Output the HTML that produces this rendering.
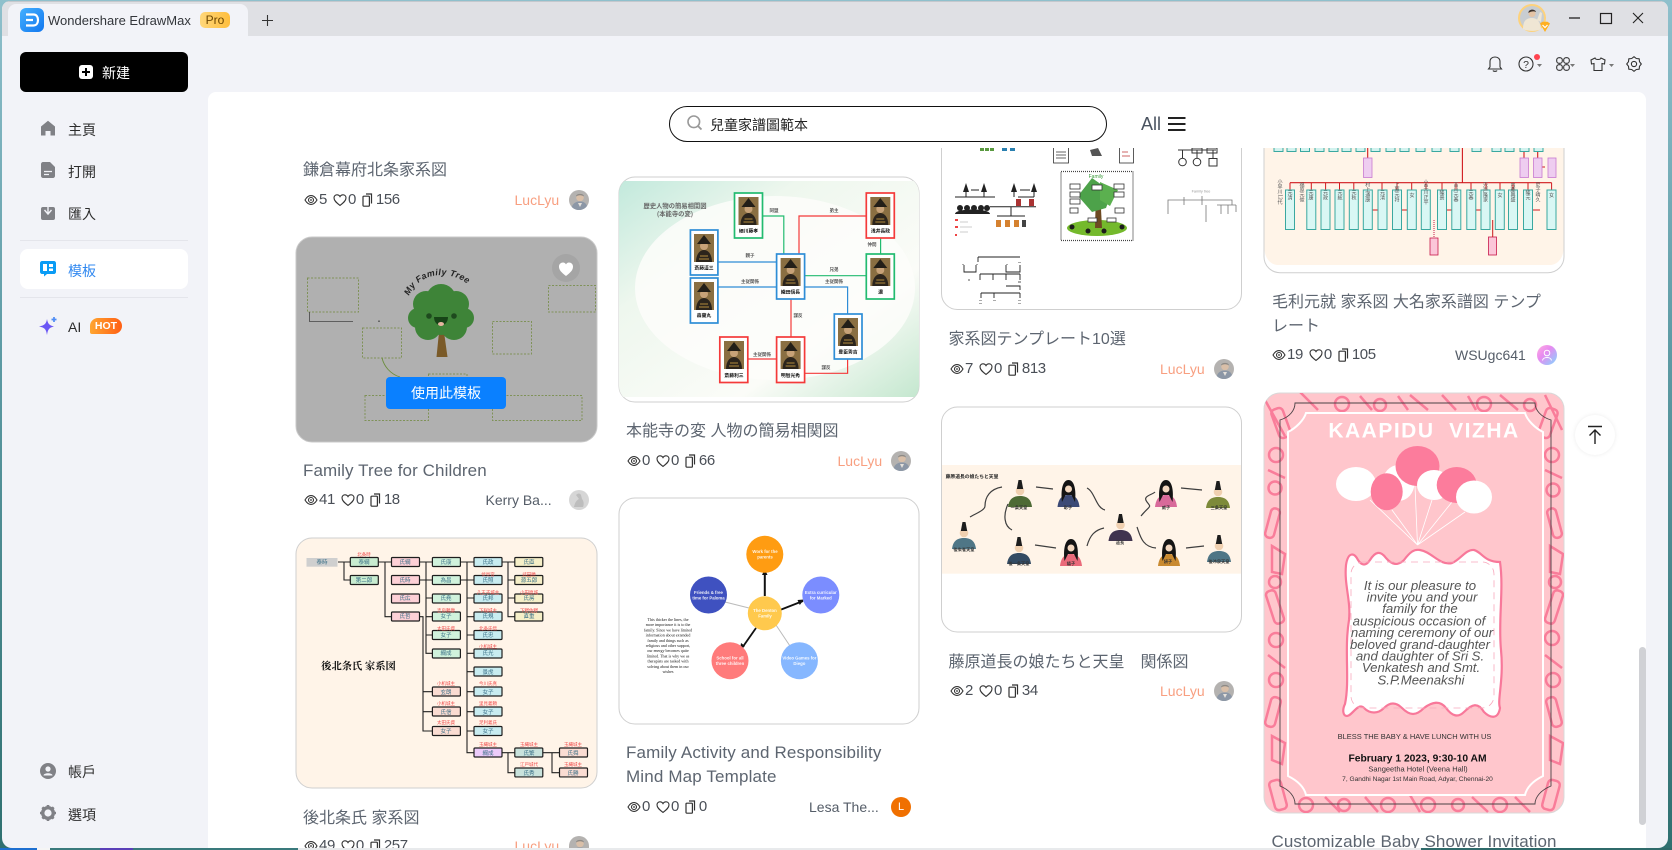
<!DOCTYPE html>
<html><head><meta charset="utf-8"><title>Wondershare EdrawMax</title>
<style>
*{box-sizing:border-box;margin:0;padding:0}
html,body{width:1672px;height:850px;overflow:hidden}
body{position:relative;background:linear-gradient(180deg,#8fc0cc 0%,#5f9ca6 40%,#2f7070 100%);font-family:"Liberation Sans","Noto Sans CJK TC",sans-serif;color:#333}
.a{position:absolute;white-space:nowrap}
.nav{position:absolute;left:68px;font-size:14px;line-height:20px;color:#2c2c2c;font-family:"Liberation Sans","Noto Sans CJK TC",sans-serif}
.t{position:absolute;font-size:16px;line-height:24px;color:#5d6570;white-space:nowrap;font-family:"Liberation Sans","Noto Sans CJK JP",sans-serif}
.e{font-size:17px;letter-spacing:.1px}
.s{position:absolute;display:flex;align-items:center;height:18px;font-size:15px;letter-spacing:-.4px;color:#4a4f57;line-height:18px;white-space:nowrap}
.s svg{flex:none}
.s b{font-weight:normal;margin:0 6px 0 1px}
.s i{font-style:normal;margin-left:3px}
.u{position:absolute;font-size:14px;line-height:18px;white-space:nowrap;color:#f89f80}
.g{color:#555d68}
.av{position:absolute;width:20px;height:20px;border-radius:50%;overflow:hidden}
.av svg{display:block}
</style></head><body>
<svg width="0" height="0" style="position:absolute"><defs>
<symbol id="eye" viewBox="0 0 14 14"><path d="M1 7C3 3.600 5 2.600 7 2.600S11 3.600 13 7C11 10.400 9 11.400 7 11.400S3 10.400 1 7Z" fill="none" stroke="#333" stroke-width="1.100"/><circle cx="7" cy="7" r="2.500" fill="none" stroke="#333" stroke-width="1.100"/><circle cx="7" cy="7" r=".9" fill="#333"/></symbol>
<symbol id="heart" viewBox="0 0 14 14"><path d="M7 12.400C3 9.400 1 7.400 1 4.900 1 3 2.400 1.800 4 1.800 5.200 1.800 6.300 2.400 7 3.600 7.700 2.400 8.800 1.800 10 1.800 11.600 1.800 13 3 13 4.900 13 7.400 11 9.400 7 12.400Z" fill="none" stroke="#333" stroke-width="1.100"/></symbol>
<symbol id="doc" viewBox="0 0 11 14"><rect x="1" y="3.200" width="6.400" height="10" rx=".8" fill="none" stroke="#333" stroke-width="1.200"/><path d="M4 1H9.500V10.500" fill="none" stroke="#333" stroke-width="1.200"/></symbol>
<symbol id="ph" viewBox="0 0 20 20"><rect width="20" height="20" fill="#b4b2b0"/><path d="M2 20C3 13 7 11.500 11 11.500S18 13 19 20Z" fill="#8c97a6"/><circle cx="11" cy="7.500" r="3.800" fill="#d9bfa8"/><path d="M7 6.500C7 3 15 3 15 6.500 13 4.800 9 4.800 7 6.500Z" fill="#8d8a86"/><path d="M9 13 11 17 13 13Z" fill="#e4e0da"/></symbol>
<g id="por"><rect width="20" height="28" fill="#8a6f42"/><path d="M2 28C2 20 6 16 10 16S18 20 18 28Z" fill="#2b241c"/><circle cx="10" cy="12" r="4" fill="#c7a278"/><path d="M3 10 10 1 17 10Z" fill="#231f18"/><path d="M6 22H14M5 25H15" stroke="#b08a3c" stroke-width="1"/></g>
<g id="man"><path d="M-12 14C-11 6-7 3 0 3S11 6 12 14Z" fill="currentColor"/><circle cx="0" cy="-2" r="4.300" fill="#f0d0b0"/><path d="M-3.200-4-1.500-13H1.500L3.200-4Z" fill="#1d1d1d"/></g>
<g id="lady"><path d="M-11 15C-10 6-6 3 0 3S10 6 11 15Z" fill="currentColor"/><path d="M-6.500 10C-8-3-5.500-12 0-12S8-3 6.500 10L3 3H-3Z" fill="#141414"/><circle cx="0" cy="-3" r="3.500" fill="#f3d8c0"/></g>
<clipPath id="c1"><rect x="296" y="237" width="301" height="205" rx="16"/></clipPath>
<clipPath id="c2"><rect x="296" y="538" width="301" height="250" rx="16"/></clipPath>
<clipPath id="c3"><rect x="619" y="177" width="300" height="225" rx="16"/></clipPath>
<clipPath id="c4"><rect x="1264" y="393" width="300" height="420" rx="16"/></clipPath>
<linearGradient id="gbg" x1="0" y1="0" x2="1" y2="1"><stop offset="0" stop-color="#c2e9dc"/><stop offset=".3" stop-color="#eef7ee"/><stop offset=".7" stop-color="#fbfcf8"/><stop offset="1" stop-color="#c4e7cf"/></linearGradient>
</defs></svg>

<!-- window -->
<div class="a" style="left:2px;top:1px;width:1666px;height:847px;background:#f2f3f8;border-radius:8px 8px 10px 10px;overflow:hidden">
  <div style="position:absolute;left:0;top:0;width:100%;height:35px;background:#dfe0e4;border-top:1px solid #c4c8cd"></div>
</div>
<div class="a" style="left:8px;top:4px;width:240px;height:32px;background:#f2f3f8;border-radius:8px 8px 0 0"></div>
<div class="a" style="left:20px;top:8px;width:24px;height:24px;border-radius:6px;background:linear-gradient(135deg,#44b0ff,#1277ef)"></div>
<svg class="a" style="left:20px;top:8px" width="24" height="24" viewBox="0 0 24 24"><path d="M6 6.500H13.500C16.500 6.500 18 9 18 12S16.500 17.500 13.500 17.500H6" fill="none" stroke="#fff" stroke-width="2.200"/><path d="M6 12H13" stroke="#fff" stroke-width="2.200"/></svg>
<div class="a" style="left:48px;top:11px;font-size:13px;line-height:20px;color:#33363b">Wondershare EdrawMax</div>
<div class="a" style="left:200px;top:12px;width:30px;height:16px;border-radius:5px;background:linear-gradient(90deg,#ffd77a,#ffbe3d);font-size:12px;line-height:16px;text-align:center;color:#6c4600">Pro</div>
<svg class="a" style="left:261px;top:14px" width="13" height="13"><path d="M6.500 1V12M1 6.500H12" stroke="#333" stroke-width="1.100"/></svg>

<!-- win controls -->
<svg class="a" style="left:1517px;top:3px" width="36" height="30" viewBox="0 0 36 30">
<circle cx="15" cy="15" r="13" fill="#c8cdd1" stroke="#fdd27c" stroke-width="2"/>
<path d="M6 26C6 17 10 15 15 15S23 18 24 26C20 28.500 10 28.500 6 26Z" fill="#efe6d4"/><path d="M20 17 23 9 25 10 24 19Z" fill="#efe6d4"/>
<circle cx="15" cy="10.500" r="3.600" fill="#e4c4a6"/><path d="M11.500 10C11 6 18 5.500 19 9 17 8 14 8 11.500 10Z" fill="#3c322c"/>
<path d="M23 20.500 25.500 18.800H30.500L33 20.500 28 29Z" fill="#ffb020"/><path d="M25.500 22 28 24.500 30.500 22" stroke="#fff" fill="none" stroke-width="1.200"/>
</svg>
<svg class="a" style="left:1565px;top:8px" width="90" height="22"><path d="M4 10H15" stroke="#222" stroke-width="1.300"/><rect x="35.500" y="5.500" width="11" height="10" fill="none" stroke="#222" stroke-width="1.200"/><path d="M68 5 78 15M78 5 68 15" stroke="#222" stroke-width="1.100"/></svg>

<!-- toolbar -->
<svg class="a" style="left:1486px;top:54px" width="166" height="20" fill="none" stroke="#333" stroke-width="1.100">
<path d="M4 13V7.500C4 4.800 6 3 9 3S14 4.800 14 7.500V13L15.500 15H2.500Z"/><path d="M7 16.500C7.500 17.600 10.500 17.600 11 16.500"/>
<circle cx="40" cy="10" r="7"/><text x="40" y="14" font-size="10.500" fill="#333" stroke="none" text-anchor="middle" font-family="Liberation Sans">?</text>
<circle cx="51" cy="3" r="3" fill="#ff4350" stroke="none"/><path d="M51 10H56L53.500 13Z" fill="#777" stroke="none"/>
<rect x="70.700" y="3.700" width="5.600" height="5.600" rx="2.300"/><rect x="77.700" y="3.700" width="5.600" height="5.600" rx="2.300"/><rect x="70.700" y="10.700" width="5.600" height="5.600" rx="2.300"/><rect x="77.700" y="10.700" width="5.600" height="5.600" rx="2.300"/><path d="M84 10H89L86.500 13Z" fill="#777" stroke="none"/>
<path d="M109 4 105 6 105.500 10 108 9.500V16.500H116V9.500L118.500 10 119 6 115 4C114.500 6 109.500 6 109 4Z"/><path d="M123 10H128L125.500 13Z" fill="#777" stroke="none"/>
<path stroke-linejoin="round" d="M155.300 10 153.500 12.300 153.200 15.200 150.300 15.500 148 17.300 145.700 15.500 142.800 15.200 142.500 12.300 140.700 10 142.500 7.700 142.800 4.800 145.700 4.500 148 2.700 150.300 4.500 153.200 4.800 153.500 7.700Z"/><circle cx="148" cy="10" r="2.600"/>
</svg>

<!-- sidebar -->
<div class="a" style="left:20px;top:52px;width:168px;height:40px;background:#000;border-radius:6px"></div>
<svg class="a" style="left:79px;top:65px" width="14" height="14"><rect width="14" height="14" rx="3" fill="#fff"/><path d="M7 3V11M3 7H11" stroke="#000" stroke-width="2"/></svg>
<div class="a" style="left:102px;top:63px;font-size:14px;line-height:20px;color:#fff">新建</div>

<svg class="a" style="left:40px;top:120px" width="16" height="16"><path d="M8 .800 15 6.500V15.500H10.500V11H5.500V15.500H1V6.500Z" fill="#808186"/></svg>
<div class="nav" style="top:120px">主頁</div>
<svg class="a" style="left:41px;top:162px" width="14" height="16"><path d="M0 2C0 1 1 0 2 0H9L14 5V14C14 15 13 16 12 16H2C1 16 0 15 0 14Z" fill="#808186"/><path d="M3 9.500H11M3 12.500H8" stroke="#f2f3f8" stroke-width="1.200"/></svg>
<div class="nav" style="top:162px">打開</div>
<svg class="a" style="left:41px;top:203px" width="14" height="17"><rect y="4" width="14" height="13" rx="2" fill="#808186"/><path d="M7 0V10M3.500 7 7 11 10.500 7" stroke="#f2f3f8" fill="none" stroke-width="1.400"/></svg>
<div class="nav" style="top:204px">匯入</div>
<div class="a" style="left:20px;top:240px;width:168px;height:1px;background:#e4e5eb"></div>
<div class="a" style="left:20px;top:249px;width:168px;height:40px;background:#fff;border-radius:8px"></div>
<svg class="a" style="left:40px;top:261px" width="16" height="16"><path d="M2 0H14C15 0 16 1 16 2V11C16 12 15 13 14 13H7L4 15.500V13H2C1 13 0 12 0 11V2C0 1 1 0 2 0Z" fill="#0a9cf5"/><path d="M3 3H7V10H3ZM9 3H13V6H9ZM9 7.500H13V10H9Z" fill="#fff"/></svg>
<div class="nav" style="top:261px;color:#3088f0">模板</div>
<div class="a" style="left:20px;top:297px;width:168px;height:1px;background:#e4e5eb"></div>
<svg class="a" style="left:38px;top:316px" width="20" height="20"><path d="M9 3C9.800 7.500 11 9.300 16 10.500 11 11.700 9.800 13.500 9 19 8.200 13.500 7 11.700 1 10.500 7 9.300 8.200 7.500 9 3Z" fill="#6a56f5"/><path d="M16 1V6M13.500 3.500H18.500" stroke="#4f8df5" stroke-width="1.700"/></svg>
<div class="nav" style="top:317px">AI</div>
<div class="a" style="left:90px;top:318px;width:32px;height:16px;border-radius:8px 8px 8px 2px;background:linear-gradient(90deg,#ffa530,#ff5f14);color:#fff;font-size:10.500px;font-weight:bold;line-height:16px;text-align:center">HOT</div>
<svg class="a" style="left:40px;top:763px" width="16" height="16"><circle cx="8" cy="8" r="8" fill="#808186"/><circle cx="8" cy="6" r="2.600" fill="#f2f3f8"/><path d="M3.500 12.500C3.500 9.500 12.500 9.500 12.500 12.500Z" fill="#f2f3f8"/></svg>
<div class="nav" style="top:762px">帳戶</div>
<svg class="a" style="left:40px;top:805px" width="16" height="16"><circle cx="8" cy="8" r="5.300" fill="none" stroke="#808186" stroke-width="3.400"/><path d="M8 0V16M0 8H16M2.300 2.300 13.700 13.700M13.700 2.300 2.300 13.700" stroke="#808186" stroke-width="2.600" stroke-dasharray="2.600 10.800"/></svg>
<div class="nav" style="top:805px">選項</div>

<!-- main panel -->
<div class="a" style="left:208px;top:92px;width:1438px;height:757px;background:#fff;border-radius:8px 8px 0 0"></div>

<!-- search -->
<div class="a" style="left:669px;top:106px;width:438px;height:36px;border:1.500px solid #111;border-radius:18px;background:#fff"></div>
<svg class="a" style="left:686px;top:114px" width="18" height="18"><circle cx="7.800" cy="7.800" r="5.800" fill="none" stroke="#999" stroke-width="1.600"/><path d="M12 12 15.500 15.500" stroke="#999" stroke-width="1.800"/></svg>
<div class="a" style="left:710px;top:115px;font-size:14px;line-height:20px;color:#222">兒童家譜圖範本</div>
<div class="a" style="left:1141px;top:113px;font-size:18px;line-height:22px;color:#4a5360">All</div>
<svg class="a" style="left:1168px;top:116px" width="18" height="16"><path d="M0 2H17.500M0 8H17.500M0 14H17.500" stroke="#222" stroke-width="2"/></svg>

<!-- scroll content -->
<div class="a" style="left:0;top:148px;width:1672px;height:700px;overflow:hidden">
<div class="a" style="left:0;top:-148px;width:1672px;height:848px">
<svg class="a" style="left:0;top:0" width="1672" height="848" viewBox="0 0 1672 848">

<!-- card: family tree -->
<rect x="296" y="237" width="301" height="205" rx="16" fill="#b0b0b0" stroke="#c9c9c9"/>
<g clip-path="url(#c1)">
<g fill="none" stroke="#7f9258" stroke-width="1" stroke-dasharray="2 1.500">
<rect x="307.500" y="278" width="51" height="34"/><rect x="548.500" y="285.500" width="47" height="26.500"/><rect x="362.500" y="328" width="39" height="30"/><rect x="492.500" y="321.500" width="39" height="32.500"/><rect x="428.500" y="374" width="38.500" height="22"/><rect x="365" y="395.500" width="63.500" height="25"/><rect x="492.500" y="395.500" width="89.500" height="25"/></g>
<path d="M309.500 312V321.500H353" fill="none" stroke="#444" stroke-width=".8"/><path d="M382 358C384 366 390 374 400 377" fill="none" stroke="#6c8d3d" stroke-width=".9"/>
<rect x="378" y="320.500" width="2" height="1.500" fill="#666"/>
<path d="M436.500 357 439 332H444L447.500 357Z" fill="#7a5a28"/>
<g fill="#3e8438"><circle cx="441" cy="299" r="15"/><circle cx="426" cy="304" r="13"/><circle cx="456" cy="304" r="13"/><circle cx="418" cy="318" r="10"/><circle cx="464" cy="318" r="10"/><circle cx="428" cy="327" r="13"/><circle cx="454" cy="327" r="13"/><circle cx="441" cy="318" r="17"/></g>
<circle cx="429" cy="316" r="2.800" fill="#1e4a1e"/><circle cx="454" cy="316" r="2.800" fill="#1e4a1e"/><path d="M434 317H448C448 328 434 328 434 317Z" fill="#174417"/><ellipse cx="441" cy="324" rx="3" ry="2" fill="#e6b5a0"/>
<path id="arc" d="M409 296C420 268 462 268 478 296" fill="none"/>
<text font-family="Liberation Sans,sans-serif" font-style="italic" font-weight="bold" font-size="8.800" fill="#222" letter-spacing=".4"><textPath href="#arc">My Family Tree</textPath></text>
</g>
<circle cx="566" cy="268" r="14" fill="#a5a5a5"/><path d="M566 276C561 272 559 270 559 266.500 559 264 561 262.500 563 262.500 564.300 262.500 565.400 263.200 566 264.400 566.600 263.200 567.700 262.500 569 262.500 571 262.500 573 264 573 266.500 573 270 571 272 566 276Z" fill="#fff"/>
<rect x="386" y="377" width="120" height="32" rx="4" fill="#0a80ff"/>
<text x="446" y="398" font-size="14" fill="#fff" text-anchor="middle" font-family="Liberation Sans,Noto Sans CJK TC,sans-serif">使用此模板</text>

<!-- card: 後北条氏 -->
<rect x="296" y="538" width="301" height="250" rx="16" fill="#fff4e8" stroke="#cfcfcf"/>
<g clip-path="url(#c2)"><svg x="296" y="538" width="301" height="239.500" viewBox="296 538 301 239.500">
<rect x="306.500" y="558" width="31" height="8.700" fill="#cfcfcf"/>
<g fill="none" stroke="#222" stroke-width="1.100">
<path d="M338 562H350M344 562V580H350M378 562H391M385 562V616.700H391M420 562H432M426 562V653.300H432M426 580H432M426 598H432M426 616.700H432M426 635H432M420 580H426M420 616.700H423V731H432M423 691.700H432M423 711.700H432M460 562H474M467 562V752.700H474M467 580H474M467 598H474M467 616.700H474M467 635H474M467 653.300H474M467 671.700H474M467 691.700H474M467 711.700H474M467 731H474M460 580H467M502 562H515M508 562V616.700H515M508 580H515M508 598H515M502 752.700H515M508 752.700V772.700H515M543 752.700H560M552 752.700V772.700H560"/>
</g>
<g stroke="#1e1e1e" stroke-width="1.200">
<g fill="#c8ecd0"><rect x="350.300" y="557.500" width="28" height="9" rx="1"/><rect x="350.300" y="575.500" width="28" height="9" rx="1"/></g>
<g fill="#fdd0d6"><rect x="391.500" y="557.500" width="28" height="9" rx="1"/><rect x="391.500" y="575.500" width="28" height="9" rx="1"/><rect x="391.500" y="594" width="28" height="9" rx="1"/><rect x="391.500" y="612" width="28" height="9" rx="1"/></g>
<g fill="#d0f2dc"><rect x="432.400" y="557.500" width="28" height="9" rx="1"/><rect x="432.400" y="575.500" width="28" height="9" rx="1"/><rect x="432.400" y="594" width="28" height="9" rx="1"/><rect x="432.400" y="612" width="28" height="9" rx="1"/><rect x="432.400" y="630.500" width="28" height="9" rx="1"/><rect x="432.400" y="649" width="28" height="9" rx="1"/></g>
<g fill="#fadcd2"><rect x="432.400" y="687" width="28" height="9" rx="1"/><rect x="432.400" y="707" width="28" height="9" rx="1"/><rect x="432.400" y="726.500" width="28" height="9" rx="1"/></g>
<g fill="#c8ecf0"><rect x="474" y="557.500" width="28" height="9" rx="1"/><rect x="474" y="575.500" width="28" height="9" rx="1"/><rect x="474" y="594" width="28" height="9" rx="1"/><rect x="474" y="612" width="28" height="9" rx="1"/><rect x="474" y="630.500" width="28" height="9" rx="1"/><rect x="474" y="649" width="28" height="9" rx="1"/><rect x="474" y="667" width="28" height="9" rx="1"/><rect x="474" y="687" width="28" height="9" rx="1"/><rect x="474" y="707" width="28" height="9" rx="1"/><rect x="474" y="726.500" width="28" height="9" rx="1"/></g>
<rect x="474" y="748" width="28" height="9" rx="1" fill="#eccbfa"/>
<g fill="#f6efc8"><rect x="514.800" y="557.500" width="28" height="9" rx="1"/><rect x="514.800" y="575.500" width="28" height="9" rx="1"/><rect x="514.800" y="594" width="28" height="9" rx="1"/><rect x="514.800" y="612" width="28" height="9" rx="1"/></g>
<g fill="#c8e2dc"><rect x="514.800" y="748" width="28" height="9" rx="1"/><rect x="514.800" y="768" width="28" height="9" rx="1"/></g>
<g fill="#fadcd2"><rect x="559.500" y="748" width="28" height="9" rx="1"/><rect x="559.500" y="768" width="28" height="9" rx="1"/></g>
</g>
<g font-size="5.500" fill="#3a6f86" text-anchor="middle" font-family="Noto Sans CJK JP,sans-serif">
<text x="322" y="564">泰時</text><text x="364" y="564">泰綱</text><text x="364" y="582">第二郎</text><text x="405" y="564">氏綱</text><text x="405" y="582">氏時</text><text x="405" y="600">氏広</text><text x="405" y="618">氏哲</text>
<text x="446" y="564">氏康</text><text x="446" y="582">為昌</text><text x="446" y="600">氏堯</text><text x="446" y="618">女子</text><text x="446" y="637">女子</text><text x="446" y="655">綱成</text><text x="446" y="694">玄朗</text><text x="446" y="714">氏信</text><text x="446" y="733">女子</text>
<text x="488" y="564">氏政</text><text x="488" y="582">氏照</text><text x="488" y="600">氏邦</text><text x="488" y="618">氏規</text><text x="488" y="637">氏忠</text><text x="488" y="655">氏光</text><text x="488" y="674">景虎</text><text x="488" y="694">女子</text><text x="488" y="714">女子</text><text x="488" y="733">女子</text><text x="488" y="755">綱成</text>
<text x="529" y="564">氏直</text><text x="529" y="582">源五郎</text><text x="529" y="600">氏房</text><text x="529" y="618">直重</text><text x="529" y="755">氏繁</text><text x="529" y="775">氏秀</text><text x="573" y="755">氏舜</text><text x="573" y="775">氏勝</text>
</g>
<g font-size="4.500" fill="#f04a4a" text-anchor="middle" font-family="Noto Sans CJK JP,sans-serif">
<text x="364" y="556">北条時</text><text x="488" y="576">伏見宮</text><text x="529" y="576">武田勝</text><text x="488" y="594">八王子城主</text><text x="529" y="594">小田原城</text><text x="488" y="612">下総城主</text><text x="529" y="612">下野佐野</text><text x="446" y="612">吉良頼康</text><text x="446" y="630">太田氏資</text><text x="488" y="630">北条氏信</text><text x="488" y="648">小机城主</text><text x="446" y="685">小机城主</text><text x="488" y="685">今川氏真</text><text x="446" y="705">小机城主</text><text x="488" y="705">里見義頼</text><text x="446" y="724">太田氏資</text><text x="488" y="724">足利義氏</text><text x="488" y="746">玉縄城主</text><text x="529" y="746">玉縄城主</text><text x="573" y="746">玉縄城主</text><text x="529" y="766">江戸城代</text><text x="573" y="766">玉縄城主</text>
</g>
<text x="358.500" y="669.500" font-size="10.300" font-weight="bold" fill="#111" text-anchor="middle" font-family="Noto Serif CJK SC,serif">後北条氏 家系図</text>
</svg></g>

<!-- card: samurai -->
<rect x="619" y="177" width="300" height="225" rx="16" fill="#fff" stroke="#cfcfcf"/>
<g clip-path="url(#c3)">
<rect x="619" y="181" width="300" height="216" fill="url(#gbg)"/>
<ellipse cx="775" cy="288" rx="140" ry="92" fill="#fdfdfa" opacity=".85"/>
<g fill="none" stroke-width="1.200">
<path d="M717.700 262H776.600M717.700 287H776.600M804.800 287H847.600V314" stroke="#2e8dd6"/>
<path d="M783.800 254V216H762.700M804.800 275.700H866.300M880.600 238V254" stroke="#22bb70"/>
<path d="M799 254V216H866.300M791 299V337M776.600 359H748M804.800 373.300H847.600V359" stroke="#f43a3a"/>
</g>
<g fill="#fff" stroke-width="1.700">
<g stroke="#22bb70"><rect x="734.500" y="193" width="28" height="45"/><rect x="866.300" y="254" width="28" height="45"/></g>
<g stroke="#f43a3a"><rect x="866.300" y="193" width="28" height="45"/><rect x="719.800" y="337" width="28" height="45.500"/><rect x="776.600" y="337" width="28" height="45.500"/></g>
<g stroke="#2e8dd6"><rect x="690.400" y="230" width="27.500" height="45"/><rect x="776.600" y="254" width="28" height="45"/><rect x="690.400" y="278" width="27.500" height="45"/><rect x="834.300" y="314" width="27.700" height="45"/></g>
</g>
<use href="#por" x="738.500" y="197"/><use href="#por" x="870.300" y="197"/><use href="#por" x="694" y="234"/><use href="#por" x="780.600" y="258"/><use href="#por" x="870.300" y="258"/><use href="#por" x="694" y="282"/><use href="#por" x="838" y="318"/><use href="#por" x="724" y="341"/><use href="#por" x="780.600" y="341"/>
<g font-size="4.800" font-weight="bold" fill="#111" text-anchor="middle" font-family="Noto Sans CJK JP,sans-serif">
<text x="748.500" y="232.500">細川藤孝</text><text x="880.500" y="232.500">浅井長政</text><text x="704" y="269.500">斎藤道三</text><text x="790.500" y="293.500">織田信長</text><text x="880.500" y="293.500">濃</text><text x="704" y="317">森蘭丸</text><text x="848" y="353.500">豊臣秀吉</text><text x="734" y="377">斎藤利三</text><text x="790.500" y="377">明智光秀</text>
</g>
<g font-size="4.500" fill="#555" font-weight="bold" text-anchor="middle" font-family="Noto Sans CJK JP,sans-serif"><text x="774" y="212">同盟</text><text x="834" y="212">弟主</text><text x="872" y="246">仲間</text><text x="750" y="257">親子</text><text x="834" y="271">兄弟</text><text x="750" y="283">主従関係</text><text x="834" y="283">主従関係</text><text x="798" y="317">謀反</text><text x="762" y="356">主従関係</text><text x="826" y="369">謀反</text></g>
<text x="675" y="208" font-size="6.300" font-weight="bold" fill="#666" text-anchor="middle" font-family="Noto Sans CJK JP,sans-serif">歴史人物の簡易相関図</text>
<text x="675" y="216" font-size="6.300" font-weight="bold" fill="#666" text-anchor="middle" font-family="Noto Sans CJK JP,sans-serif">(本能寺の変)</text>
</g>

<!-- card: mind map -->
<rect x="619" y="498" width="300" height="226" rx="16" fill="#fff" stroke="#cfcfcf"/>
<path d="M764.800 596V573" stroke="#111" stroke-width="2"/><path d="M764.800 569 762 575H767.500Z" fill="#111"/>
<path d="M780 610 803 601" stroke="#111" stroke-width="1.800"/><path d="M804 599.500 797.500 600 799.800 605Z" fill="#111"/>
<path d="M756 628 742 648" stroke="#111" stroke-width="1.800"/><path d="M740 650 745 646 741 643Z" fill="#111"/>
<path d="M725 602 749 608M776 625 790 646" stroke="#bbb" stroke-width="1"/>
<circle cx="764.800" cy="554.300" r="18.500" fill="#ff9c12"/><circle cx="708.500" cy="595" r="18.500" fill="#3f51c0"/><circle cx="820.800" cy="595" r="18.500" fill="#7b8dff"/><circle cx="764.800" cy="613.300" r="17" fill="#ffc94d"/><circle cx="730" cy="660.700" r="18.500" fill="#ff7b7b"/><circle cx="799.400" cy="660.700" r="18.500" fill="#86b7ff"/>
<g font-size="4.300" fill="#fff" text-anchor="middle" font-weight="bold" font-family="Liberation Sans,sans-serif" opacity=".9">
<text x="765" y="553">Work for the</text><text x="765" y="558.500">parents</text><text x="708.500" y="594">Friends &amp; free</text><text x="708.500" y="599.500">time for Paloma</text><text x="820.800" y="594">Extra curricular</text><text x="820.800" y="599.500">for Marked</text><text x="765" y="612">The Denton</text><text x="765" y="617.500">Family</text><text x="730" y="659.500">School for all</text><text x="730" y="665">three children</text><text x="799.400" y="659.500">Video Games for</text><text x="799.400" y="665">Diego</text></g>
<g font-size="4.050" fill="#111" text-anchor="middle" font-family="Liberation Serif,serif">
<text x="668" y="621">This thicker the lines, the</text><text x="668" y="626.200">more importance it is to the</text><text x="668" y="631.400">family. Since we have limited</text><text x="668" y="636.600">information about extended</text><text x="668" y="641.800">family and things such as</text><text x="668" y="647">religious and other support,</text><text x="668" y="652.200">our energy becomes quite</text><text x="668" y="657.400">limited. That is why we as</text><text x="668" y="662.600">therapists are tasked with</text><text x="668" y="667.800">solving about them in our</text><text x="668" y="673">wishes</text></g>

<!-- card: 家系図テンプレート -->
<rect x="941.500" y="120" width="300" height="189.500" rx="16" fill="#fff" stroke="#cfcfcf"/>
<g>
<rect x="980" y="148" width="4" height="3" fill="#5a9a40"/><rect x="985" y="148" width="4" height="3" fill="#5a9a40"/><rect x="990" y="148" width="4" height="3" fill="#5a9a40"/><rect x="1002" y="148" width="5" height="3" fill="#2a80b0"/><rect x="1010" y="148" width="5" height="3" fill="#2a80b0"/>
<rect x="1053.500" y="140" width="15" height="23" fill="#fff" stroke="#333" stroke-width=".8"/><path d="M1056 152H1066M1056 155H1066M1056 158H1066" stroke="#666"/>
<path d="M1090 150 1098 148 1102 156H1092Z" fill="#555"/>
<rect x="1119.500" y="140" width="14" height="23" fill="#fff" stroke="#333" stroke-width=".8"/><path d="M1122 152H1128M1122 156H1130" stroke="#c66"/>
<g fill="none" stroke="#333"><circle cx="1182.500" cy="162" r="3.800"/><circle cx="1197" cy="162" r="3.800"/><rect x="1209" y="158.500" width="8" height="7.500"/><path d="M1178 150H1216M1182.500 150V158M1197 150V158M1213 150V158"/><rect x="1192" y="148" width="10" height="5"/><rect x="1207" y="148" width="10" height="5"/></g>
<g fill="#222"><path d="M963 192 966 183 969 192ZM981 192 984 183 987 192ZM1011 192 1014 183 1017 192ZM1031 192 1034 183 1037 192Z"/><circle cx="960" cy="208" r="3"/><circle cx="967" cy="208" r="3"/><circle cx="974" cy="208" r="3"/><circle cx="981" cy="208" r="3"/><circle cx="987" cy="208" r="3"/><path d="M955 214C955 208 990 208 990 214Z"/><rect x="1016" y="199" width="5" height="7" fill="#a33"/><rect x="1029" y="199" width="5" height="7" fill="#a33"/></g>
<path d="M966 192V197M971 190H979M984 192V197M955 197H995M1014 192V197M1020 190H1030M1034 192V197M1018 197H1034M990 206.700H1036M1011 206.700V216M997 216H1025" stroke="#222" fill="none"/>
<g fill="#d5812f"><rect x="996" y="220" width="5" height="7"/><rect x="1005" y="220" width="5" height="7"/><rect x="1014" y="220" width="5" height="7"/><rect x="1022" y="220" width="4" height="7" fill="#444"/></g>
<path d="M955 220H958M955 227H958M955 235H957" stroke="#e44" stroke-width="2"/><path d="M960 222H968M960 227H972M960 232H968" stroke="#ccc"/>
<rect x="1061" y="171.500" width="72" height="69" fill="#fff" stroke="#444" stroke-width="1.300" stroke-dasharray="1 1"/>
<ellipse cx="1097" cy="228" rx="30" ry="8" fill="#74b92c"/><path d="M1095 228 1096 190H1100L1102 228Z" fill="#6d4a22"/><path d="M1078 196 1092 178 1112 192 1106 208 1092 212Z" fill="#4da24a"/><path d="M1100 182 1118 190 1110 206 1100 200Z" fill="#5bb04f"/>
<text x="1096" y="178" font-size="5" fill="#3a9a3a" text-anchor="middle" font-family="Liberation Sans">Family</text>
<g fill="#fff" stroke="#333" stroke-width=".8"><rect x="1070" y="184" width="10" height="5"/><rect x="1070" y="192" width="10" height="5"/><rect x="1070" y="199" width="10" height="5"/><rect x="1092" y="185" width="10" height="5"/><rect x="1114" y="184" width="10" height="5"/><rect x="1114" y="192" width="10" height="5"/><rect x="1070" y="208" width="8" height="5"/><rect x="1115" y="208" width="9" height="5"/><rect x="1088" y="218" width="9" height="4"/><rect x="1107" y="218" width="9" height="4"/></g>
<g fill="#1c1c1c"><circle cx="1072" cy="227" r="2.500"/><circle cx="1088" cy="231" r="2.500"/><circle cx="1104" cy="231" r="2.500"/><circle cx="1122" cy="227" r="2.500"/></g>
<path d="M1168 205V200H1232V205M1184 197V200M1202 196V200M1168 205V214M1184 200V205M1202 200V205M1217 205H1236M1221 205V214M1228 205V214M1236 205V212M1206 205 1206 222" stroke="#777" fill="none" stroke-width=".8"/><text x="1201" y="192.500" font-size="3.800" fill="#999" text-anchor="middle" font-family="Liberation Sans">Family tree</text>
<g fill="none" stroke="#222" stroke-width=".9"><path d="M978 257H1020M978 257V262M964 265V272H976V265M1006 265V272H1020V265M980 274H1020M980 274V280M993 274V280M1006 274V280M1020 274V280M1006 286H1020V290M981 293H1020M981 293V298M994 293V298M1020 293V298"/></g>
<g fill="#aaa"><rect x="962" y="264" width="2" height="1"/><rect x="976" y="264" width="2" height="1"/><rect x="1006" y="264" width="2" height="1"/><rect x="1018" y="262" width="3" height="1"/><rect x="968" y="279" width="2" height="2"/><rect x="1018" y="281" width="3" height="2"/><rect x="979" y="300" width="3" height="1"/><rect x="993" y="300" width="3" height="1"/><rect x="1018" y="300" width="3" height="1"/><rect x="979" y="303" width="3" height="1"/><rect x="1018" y="303" width="3" height="1"/></g>
</g>

<!-- card: 藤原道長 -->
<rect x="941.500" y="407" width="300" height="225" rx="16" fill="#fff" stroke="#cfcfcf"/>
<rect x="942" y="465" width="299" height="108.700" fill="#fff4e8"/>
<text x="972" y="478" font-size="4.800" font-weight="bold" fill="#222" text-anchor="middle" font-family="Noto Sans CJK JP,sans-serif">藤原道長の娘たちと天皇</text>
<g fill="none" stroke="#3e3e3e" stroke-width="1.200">
<path d="M1002 487C990 489 985 497 985 506 985 510 977 513 970 517"/><path d="M1036 487 1053 489M1087 488C1095 492 1096 508 1105 510M1141 516C1150 505 1152 508 1147 502 1142 496 1152 495 1155 492"/><path d="M1181 488 1202 490M1008 504C1003 515 1004 526 1012 530M1035 545 1056 548M1087 546C1090 535 1095 530 1104 528M1137 527C1140 535 1142 547 1156 548M1186 548 1204 546"/>
</g>
<use href="#man" x="1020" y="493" style="color:#4d6a35"/><use href="#lady" x="1068.500" y="492" style="color:#3c4a76"/><use href="#man" x="1120.500" y="527" style="color:#40344f"/><use href="#lady" x="1166" y="492" style="color:#d86a9a"/><use href="#man" x="1218" y="494" style="color:#7d8a3a"/><use href="#man" x="964" y="535" style="color:#4f7686"/><use href="#man" x="1019" y="550" style="color:#334b63"/><use href="#lady" x="1071" y="551" style="color:#ea6a7a"/><use href="#lady" x="1169" y="551" style="color:#c98a30"/><use href="#man" x="1219" y="548" style="color:#4f7686"/>
<g font-size="4.200" font-weight="bold" fill="#333" text-anchor="middle" font-family="Noto Sans CJK JP,sans-serif"><text x="1019" y="509">一条天皇</text><text x="1068" y="509">彰子</text><text x="1120" y="544">道長</text><text x="1166" y="509">威子</text><text x="1219" y="509">三条天皇</text><text x="964" y="551">後朱雀天皇</text><text x="1019" y="565">後一条天皇</text><text x="1071" y="565">嬉子</text><text x="1168" y="563">妍子</text><text x="1219" y="563">後冷泉天皇</text></g>

<!-- card: 毛利元就 -->
<rect x="1264" y="120" width="300" height="152.700" rx="16" fill="#fff" stroke="#cfcfcf"/>
<path d="M1264.500 120H1563.500V249C1563.500 257 1558 265 1550 265H1278C1270 265 1264.500 257 1264.500 249Z" fill="#fff4e8"/>
<path d="M1462.400 148V182.700M1290 182.700H1551.600M1367.700 148V158M1524 148V158M1537.700 160V148M1540 167H1545" stroke="#d01a1e" fill="none" stroke-width="1.100"/>
<g fill="#d2f2ee" stroke="#3aa8a0" stroke-width="1"><rect x="1274" y="144" width="9" height="7.500"/><rect x="1287" y="144" width="9" height="7.500"/><rect x="1300.500" y="144" width="9" height="7.500"/><rect x="1315" y="144" width="9" height="7.500"/><rect x="1329" y="144" width="9" height="7.500"/><rect x="1342" y="144" width="9" height="7.500"/><rect x="1356" y="144" width="9" height="7.500"/><rect x="1371" y="144" width="9" height="7.500"/><rect x="1386" y="144" width="9" height="7.500"/><rect x="1400" y="144" width="9" height="7.500"/><rect x="1416" y="144" width="9" height="7.500"/><rect x="1432" y="144" width="9" height="7.500"/><rect x="1450" y="144" width="9" height="7.500"/><rect x="1472" y="144" width="9" height="7.500"/><rect x="1492" y="144" width="9" height="7.500"/><rect x="1505" y="144" width="9" height="7.500"/><rect x="1520" y="144" width="9" height="7.500"/><rect x="1534" y="144" width="9" height="7.500"/></g>
<g fill="#eecdf0" stroke="#c87ad0" stroke-width=".8"><rect x="1363.500" y="158" width="8.500" height="19.500"/><rect x="1520" y="158" width="8.500" height="19.500"/><rect x="1533.500" y="158" width="8.500" height="19.500"/><rect x="1548" y="158" width="8" height="19.500"/></g>
<g fill="#fbc6d8" stroke="#c8184a" stroke-width=".8"><rect x="1430" y="238" width="8" height="17"/><rect x="1488.500" y="237" width="8" height="18"/></g>
<path d="M1434 220V238" stroke="#c8184a" stroke-dasharray="1 1"/><path d="M1492.700 220V237" stroke="#c8181c"/>
<g stroke="#d01a1e"><path d="M1290 182.700V190M1311.300 182.700V190M1325.600 182.700V190M1339.500 182.700V190M1353.800 182.700V190M1382 182.700V190M1397 182.700V190M1411.700 182.700V190M1426 182.700V190M1442 182.700V190M1456 182.700V190M1471 182.700V190M1486 182.700V190M1500 182.700V190M1513 182.700V190M1528 182.700V190M1551.600 182.700V190M1372 210H1378M1401 210H1407M1446 210H1452M1475 210H1481M1532 210H1540"/></g>
<g fill="#d9f7f4" stroke="#3aa8a0" stroke-width="1"><rect x="1285.500" y="190" width="9" height="39.500"/><rect x="1306.800" y="190" width="9" height="39.500"/><rect x="1321" y="190" width="9" height="39.500"/><rect x="1335" y="190" width="9" height="39.500"/><rect x="1349.300" y="190" width="9" height="39.500"/><rect x="1363.300" y="190" width="9" height="39.500"/><rect x="1378" y="190" width="9" height="39.500"/><rect x="1392.500" y="190" width="9" height="39.500"/><rect x="1407.300" y="190" width="9" height="39.500"/><rect x="1421.300" y="190" width="9" height="39.500"/><rect x="1437.500" y="190" width="9" height="39.500"/><rect x="1451.800" y="190" width="9" height="39.500"/><rect x="1466.800" y="190" width="9" height="39.500"/><rect x="1481" y="190" width="9" height="39.500"/><rect x="1495.300" y="190" width="9" height="39.500"/><rect x="1508.500" y="190" width="9" height="39.500"/><rect x="1523.500" y="190" width="9" height="39.500"/><rect x="1547" y="190" width="9" height="39.500"/></g>
<g font-size="5" fill="#555" text-anchor="middle" writing-mode="tb" font-family="Noto Sans CJK JP,sans-serif"><text x="1280" y="192">小早川12代</text><text x="1290" y="195">元清</text><text x="1302" y="192">福原元俊</text><text x="1311" y="195">元康</text><text x="1325.500" y="195">元政</text><text x="1340" y="195">元総</text><text x="1354" y="195">元秋</text><text x="1367.800" y="192">村上通康</text><text x="1382.500" y="195">元清</text><text x="1397" y="192">上原元将</text><text x="1412" y="195">女</text><text x="1426" y="192">小早川正平</text><text x="1442" y="195">隆景</text><text x="1456" y="192">吉川元春</text><text x="1471" y="195">元春</text><text x="1485.500" y="192">宍戸隆家</text><text x="1500" y="195">女</text><text x="1513" y="192">内藤興盛</text><text x="1528" y="195">隆元</text><text x="1538" y="192">尼子晴久</text><text x="1551.500" y="195">女</text></g>

<!-- card: baby shower -->
<rect x="1264" y="393" width="300" height="420" rx="16" fill="#ffc6cc" stroke="#d8d8d8"/>
<g clip-path="url(#c4)">
<g fill="none" stroke="#f97d9a" stroke-width="2.500">
<circle cx="1342" cy="404" r="7"/><circle cx="1380" cy="405" r="6"/><circle cx="1484" cy="404" r="7"/><circle cx="1530" cy="405" r="6"/><path d="M1300 392 1318 410M1360 396 1372 410M1398 396 1408 410M1410 395 1428 410M1442 395 1456 410M1468 396 1476 410M1500 395 1518 410M1545 395 1562 430M1265 400 1285 436"/><rect x="1275" y="408" width="12" height="30" rx="4" transform="rotate(-20 1281 423)"/><rect x="1542" y="408" width="12" height="30" rx="4" transform="rotate(20 1548 423)"/>
<circle cx="1276" cy="455" r="7"/><circle cx="1552" cy="455" r="7"/><circle cx="1275" cy="488" r="6.500"/><circle cx="1553" cy="490" r="6.500"/><path d="M1268 470 1285 478M1545 470 1562 478"/><rect x="1268" y="508" width="9" height="30" rx="4" transform="rotate(15 1272 523)"/><rect x="1550" y="508" width="9" height="30" rx="4" transform="rotate(-15 1555 523)"/>
<path d="M1272 546 1285 554 1282 574 1272 572ZM1550 546 1563 554 1560 574 1550 572Z"/><circle cx="1275" cy="582" r="6"/><circle cx="1555" cy="582" r="6"/><rect x="1270" y="590" width="10" height="34" rx="4" transform="rotate(-18 1275 607)"/><rect x="1549" y="590" width="10" height="34" rx="4" transform="rotate(18 1554 607)"/><circle cx="1276" cy="640" r="7"/><circle cx="1552" cy="638" r="7"/><path d="M1268 655 1285 668M1545 655 1562 668"/><circle cx="1276" cy="680" r="7"/><circle cx="1553" cy="680" r="7"/><rect x="1268" y="697" width="10" height="30" rx="4" transform="rotate(15 1273 712)"/><rect x="1549" y="697" width="10" height="30" rx="4" transform="rotate(-15 1554 712)"/>
<path d="M1272 736 1285 743 1282 764 1272 760ZM1550 736 1563 743 1560 764 1550 760Z"/><rect x="1272" y="780" width="12" height="30" rx="4" transform="rotate(-15 1278 795)"/><rect x="1545" y="780" width="12" height="30" rx="4" transform="rotate(15 1551 795)"/>
<circle cx="1306" cy="805" r="7"/><circle cx="1344" cy="805" r="6"/><circle cx="1388" cy="805" r="7"/><circle cx="1428" cy="805" r="7"/><circle cx="1458" cy="805" r="6"/><circle cx="1500" cy="805" r="7"/><path d="M1325 797 1340 812M1365 797 1378 812M1410 795 1420 812M1472 797 1488 812M1515 797 1530 812"/>
</g>
<path d="M1288 432V776C1296 780 1304 786 1306 795H1525C1527 786 1535 780 1543 776V432C1535 428 1527 420 1525 413H1306C1304 420 1296 428 1288 432Z" fill="#ffc6cc" stroke="#fff" stroke-width="2"/>
<path d="M1295 403H1535C1535 410 1541 417 1551 420V786C1541 790 1535 797 1535 804H1295C1295 797 1290 790 1280 786V420C1290 417 1295 410 1295 403Z" fill="none" stroke="#4a4145" stroke-width=".9"/>
<text x="1424" y="437.500" font-size="21" font-weight="bold" fill="#fff" text-anchor="middle" letter-spacing="1.500" xml:space="preserve" font-family="Liberation Sans,sans-serif">KAAPIDU  VIZHA</text>
<g fill="none" stroke="#fff" stroke-width=".8"><path d="M1417.500 545 1370 500M1417.500 545 1392 510M1417.500 545 1415 486M1417.500 545 1432 500M1417.500 545 1452 502M1417.500 545 1465 512"/></g>
<ellipse cx="1398.500" cy="483" rx="16" ry="18" fill="#fff"/><ellipse cx="1356" cy="484" rx="20" ry="17" fill="#fff"/><ellipse cx="1417.500" cy="466" rx="22" ry="20" fill="#fc7c9c"/><ellipse cx="1386.700" cy="491.700" rx="16" ry="18.500" fill="#fc7c9c"/><ellipse cx="1434" cy="485" rx="17" ry="15" fill="#fff"/><ellipse cx="1456.700" cy="485" rx="20" ry="18" fill="#fc7c9c"/><ellipse cx="1474" cy="497" rx="18" ry="16.500" fill="#fff"/>
<path d="M1346 565C1348 552 1354 552 1358 560 1362 566 1366 566 1370 560 1375 552 1380 550 1386 558 1392 565 1398 566 1404 560 1410 552 1414 549 1420 550 1432 552 1440 566 1452 563 1460 560 1466 549 1474 550 1482 552 1484 562 1500 562 1504 590 1498 620 1501 650 1504 680 1497 700 1500 708 1498 720 1490 718 1484 712 1478 702 1472 704 1464 712 1458 718 1452 716 1446 708 1440 700 1432 702 1424 708 1416 716 1410 716 1402 708 1396 702 1390 702 1384 708 1378 714 1370 714 1364 708 1358 702 1352 716 1347 716 1343 716 1342 710 1345 704 1350 680 1344 650 1349 620 1351 600 1344 585 1346 565Z" fill="#fff" stroke="#f8789a" stroke-width="2.200"/>
<rect x="1351" y="562" width="143" height="146" rx="12" fill="none" stroke="#f8a9bd" stroke-width=".8" stroke-dasharray="7 5"/>
<g font-size="13.200" font-style="italic" fill="#555" text-anchor="middle" font-family="Liberation Sans,sans-serif">
<text x="1420" y="590">It  is  our  pleasure  to</text><text x="1422" y="601.500">invite  you and  your</text><text x="1420" y="613">family  for   the</text><text x="1419" y="625.500">auspicious occasion of</text><text x="1422" y="637">naming ceremony of  our</text><text x="1420" y="649">beloved grand-daughter</text><text x="1420" y="660.500">and daughter of  Sri  S.</text><text x="1421" y="672">Venkatesh  and  Smt.</text><text x="1421" y="684.500">S.P.Meenakshi</text></g>
<text x="1414.500" y="739" font-size="7.500" fill="#333" text-anchor="middle" font-family="Liberation Sans,sans-serif">BLESS THE BABY &amp; HAVE LUNCH WITH US</text>
<text x="1417.500" y="761.500" font-size="10.300" font-weight="bold" fill="#111" text-anchor="middle" font-family="Liberation Sans,sans-serif">February 1 2023, 9:30-10 AM</text>
<text x="1418" y="771.500" font-size="7.500" fill="#333" text-anchor="middle" font-family="Liberation Sans,sans-serif">Sangeetha Hotel (Veena Hall)</text>
<text x="1417.500" y="781" font-size="6.600" fill="#333" text-anchor="middle" font-family="Liberation Sans,sans-serif">7, Gandhi Nagar 1st Main Road, Adyar, Chennai-20</text>
</g>
</svg>

<!-- column 1 text -->
<div class="t" style="left:303px;top:159px">鎌倉幕府北条家系図</div>
<div class="s" style="left:304px;top:191px"><svg width="14" height="14"><use href="#eye"/></svg><b>5</b><svg width="14" height="14"><use href="#heart"/></svg><b>0</b><svg width="11" height="14"><use href="#doc"/></svg><i>156</i></div>
<div class="u" style="left:514.500px;top:191px">LucLyu</div><div class="av" style="left:569px;top:190px"><svg width="20" height="20"><use href="#ph"/></svg></div>
<div class="t e" style="left:303px;top:459px">Family Tree for Children</div>
<div class="s" style="left:304px;top:491px"><svg width="14" height="14"><use href="#eye"/></svg><b>41</b><svg width="14" height="14"><use href="#heart"/></svg><b>0</b><svg width="11" height="14"><use href="#doc"/></svg><i>18</i></div>
<div class="u g" style="left:485.500px;top:491px">Kerry Ba...</div><div class="av" style="left:569px;top:490px;background:#d6d6d6"><svg width="20" height="20"><path d="M5 17C6 12 8 10 10 9L7 5C9 3 11 3 12 5L13 9C15 11 15 15 14 17Z" fill="#bdbdbd"/></svg></div>
<div class="t" style="left:303px;top:807px">後北条氏 家系図</div>
<div class="s" style="left:304px;top:837px;height:11px;overflow:hidden;align-items:flex-start"><svg width="14" height="9" viewBox="0 0 14 9" style="margin-top:2px"><use href="#eye" width="14" height="14"/></svg><b>49</b><svg width="14" height="9" viewBox="0 0 14 9" style="margin-top:2px"><use href="#heart" width="14" height="14"/></svg><b>0</b><svg width="11" height="9" viewBox="0 0 11 9" style="margin-top:2px"><use href="#doc" width="11" height="14"/></svg><i>257</i></div>
<div class="u" style="left:514.500px;top:837px;height:11px;overflow:hidden">LucLyu</div><div class="av" style="left:569px;top:836px;height:12px;border-radius:10px 10px 0 0"><svg width="20" height="12" viewBox="0 0 20 12"><use href="#ph" width="20" height="20"/></svg></div>

<!-- column 2 text -->
<div class="t" style="left:626px;top:420px">本能寺の変 人物の簡易相関図</div>
<div class="s" style="left:627px;top:452px"><svg width="14" height="14"><use href="#eye"/></svg><b>0</b><svg width="14" height="14"><use href="#heart"/></svg><b>0</b><svg width="11" height="14"><use href="#doc"/></svg><i>66</i></div>
<div class="u" style="left:837.500px;top:452px">LucLyu</div><div class="av" style="left:891px;top:451px"><svg width="20" height="20"><use href="#ph"/></svg></div>
<div class="t e" style="left:626px;top:741px;letter-spacing:.15px">Family Activity and Responsibility</div>
<div class="t e" style="left:626px;top:765px;letter-spacing:.15px">Mind Map Template</div>
<div class="s" style="left:627px;top:798px"><svg width="14" height="14"><use href="#eye"/></svg><b>0</b><svg width="14" height="14"><use href="#heart"/></svg><b>0</b><svg width="11" height="14"><use href="#doc"/></svg><i>0</i></div>
<div class="u g" style="left:809px;top:798px">Lesa The...</div><div class="av" style="left:891px;top:797px;background:#f07000;color:#fff;font-size:11px;line-height:20px;text-align:center">L</div>

<!-- column 3 text -->
<div class="t" style="left:948.500px;top:328px">家系図テンプレート10選</div>
<div class="s" style="left:950px;top:360px"><svg width="14" height="14"><use href="#eye"/></svg><b>7</b><svg width="14" height="14"><use href="#heart"/></svg><b>0</b><svg width="11" height="14"><use href="#doc"/></svg><i>813</i></div>
<div class="u" style="left:1160px;top:360px">LucLyu</div><div class="av" style="left:1214px;top:359px"><svg width="20" height="20"><use href="#ph"/></svg></div>
<div class="t" style="left:948.500px;top:651px">藤原道長の娘たちと天皇　関係図</div>
<div class="s" style="left:950px;top:682px"><svg width="14" height="14"><use href="#eye"/></svg><b>2</b><svg width="14" height="14"><use href="#heart"/></svg><b>0</b><svg width="11" height="14"><use href="#doc"/></svg><i>34</i></div>
<div class="u" style="left:1160px;top:682px">LucLyu</div><div class="av" style="left:1214px;top:681px"><svg width="20" height="20"><use href="#ph"/></svg></div>

<!-- column 4 text -->
<div class="t" style="left:1272px;top:291px">毛利元就 家系図 大名家系譜図 テンプ</div>
<div class="t" style="left:1272px;top:315px">レート</div>
<div class="s" style="left:1272px;top:346px"><svg width="14" height="14"><use href="#eye"/></svg><b>19</b><svg width="14" height="14"><use href="#heart"/></svg><b>0</b><svg width="11" height="14"><use href="#doc"/></svg><i>105</i></div>
<div class="u g" style="left:1455px;top:346px">WSUgc641</div><div class="av" style="left:1537px;top:345px;background:linear-gradient(135deg,#ffb0e0,#e88af0 40%,#80d8ff)"><svg width="20" height="20"><circle cx="10" cy="8" r="2.800" fill="none" stroke="#fff" stroke-width="1"/><path d="M5.500 15.500C6 11.500 14 11.500 14.500 15.500" fill="none" stroke="#fff" stroke-width="1"/></svg></div>
<div class="t e" style="left:1271.500px;top:830px;height:18px;overflow:hidden">Customizable Baby Shower Invitation</div>
</div></div>

<!-- back to top -->
<div class="a" style="left:1575px;top:415px;width:40px;height:40px;border-radius:50%;background:#fff;box-shadow:0 0 5px rgba(0,0,0,.08)"></div>
<svg class="a" style="left:1587px;top:425px" width="16" height="20"><path d="M1 1.500H15M8 19V5M2.500 10.500 8 5 13.500 10.500" fill="none" stroke="#222" stroke-width="1.400"/></svg>
<!-- scrollbar -->
<div class="a" style="left:1638.500px;top:647px;width:7.500px;height:178px;background:#d0d1d5;border-radius:4px"></div>

<!-- bottom stripe -->
<div class="a" style="left:0;top:848px;width:1672px;height:2px;background:#e8eaec">
<div class="a" style="left:0;top:0;width:37px;height:2px;background:#1e6fd0"></div>
<div class="a" style="left:37px;top:0;width:13px;height:2px;background:#f5f5f5"></div>
<div class="a" style="left:50px;top:0;width:50px;height:2px;background:#3a7a7c"></div>
<div class="a" style="left:100px;top:0;width:33px;height:2px;background:#5a3fb8"></div>
<div class="a" style="left:133px;top:0;width:165px;height:2px;background:#3a7a7c"></div>
<div class="a" style="left:1421px;top:0;width:251px;height:2px;background:#2f6a6a"></div>
</div>
</body></html>
